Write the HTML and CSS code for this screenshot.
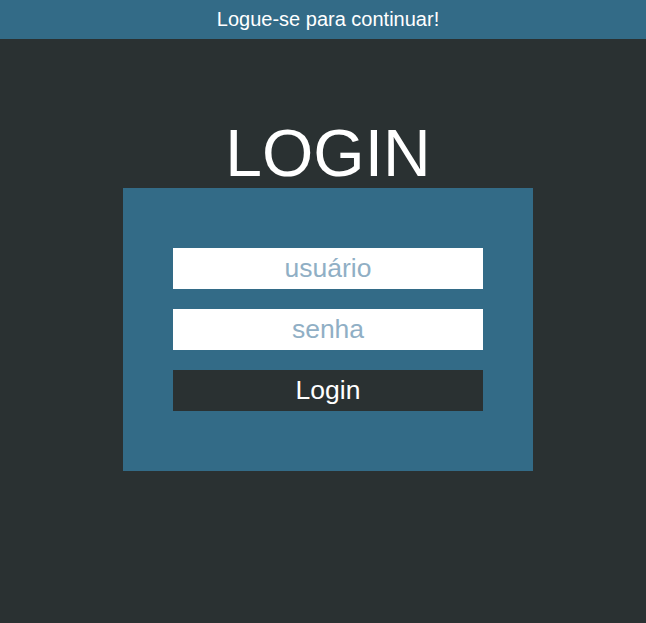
FILE: index.html
```html
<!DOCTYPE html>
<html lang="pt">
<head>
<meta charset="utf-8">
<title>Login</title>
<link rel="stylesheet" href="styles.css">
</head>
<body>
<header class="topbar">Logue-se para continuar!</header>
<main class="main">
  <h1 class="title">LOGIN</h1>
  <form class="card">
    <input class="field" type="text" placeholder="usuário">
    <input class="field" type="password" placeholder="senha">
    <button class="btn" type="button">Login</button>
  </form>
</main>
</body>
</html>
```
FILE: styles.css
```css
html, body {
  margin: 0;
  padding: 0;
  background: #2a3132;
  font-family: "Liberation Sans", Arial, sans-serif;
}
.topbar {
  height: 39px;
  padding-left: 10px;
  background: #336b87;
  color: #ffffff;
  font-size: 20px;
  display: flex;
  align-items: center;
  justify-content: center;
}
.main {
  display: flex;
  flex-direction: column;
  align-items: center;
  padding-top: 79px;
  padding-left: 10px;
}
.title {
  margin: 0;
  font-size: 66px;
  font-weight: normal;
  line-height: 70px;
  color: #ffffff;
}
.card {
  margin: 0;
  width: 410px;
  box-sizing: border-box;
  padding: 60px 50px;
  background: #336b87;
  display: flex;
  flex-direction: column;
  gap: 20px;
}
.field, .btn {
  display: block;
  width: 310px;
  height: 41px;
  box-sizing: border-box;
  border: 0;
  margin: 0;
  padding: 0;
  font-family: "Liberation Sans", Arial, sans-serif;
  font-size: 26.5px;
  text-align: center;
  outline: none;
}
.field {
  background: #ffffff;
  color: #2a3132;
}
.field::placeholder {
  color: #90afc5;
  opacity: 1;
}
.btn {
  background: #2a3132;
  color: #ffffff;
  cursor: pointer;
}
```
